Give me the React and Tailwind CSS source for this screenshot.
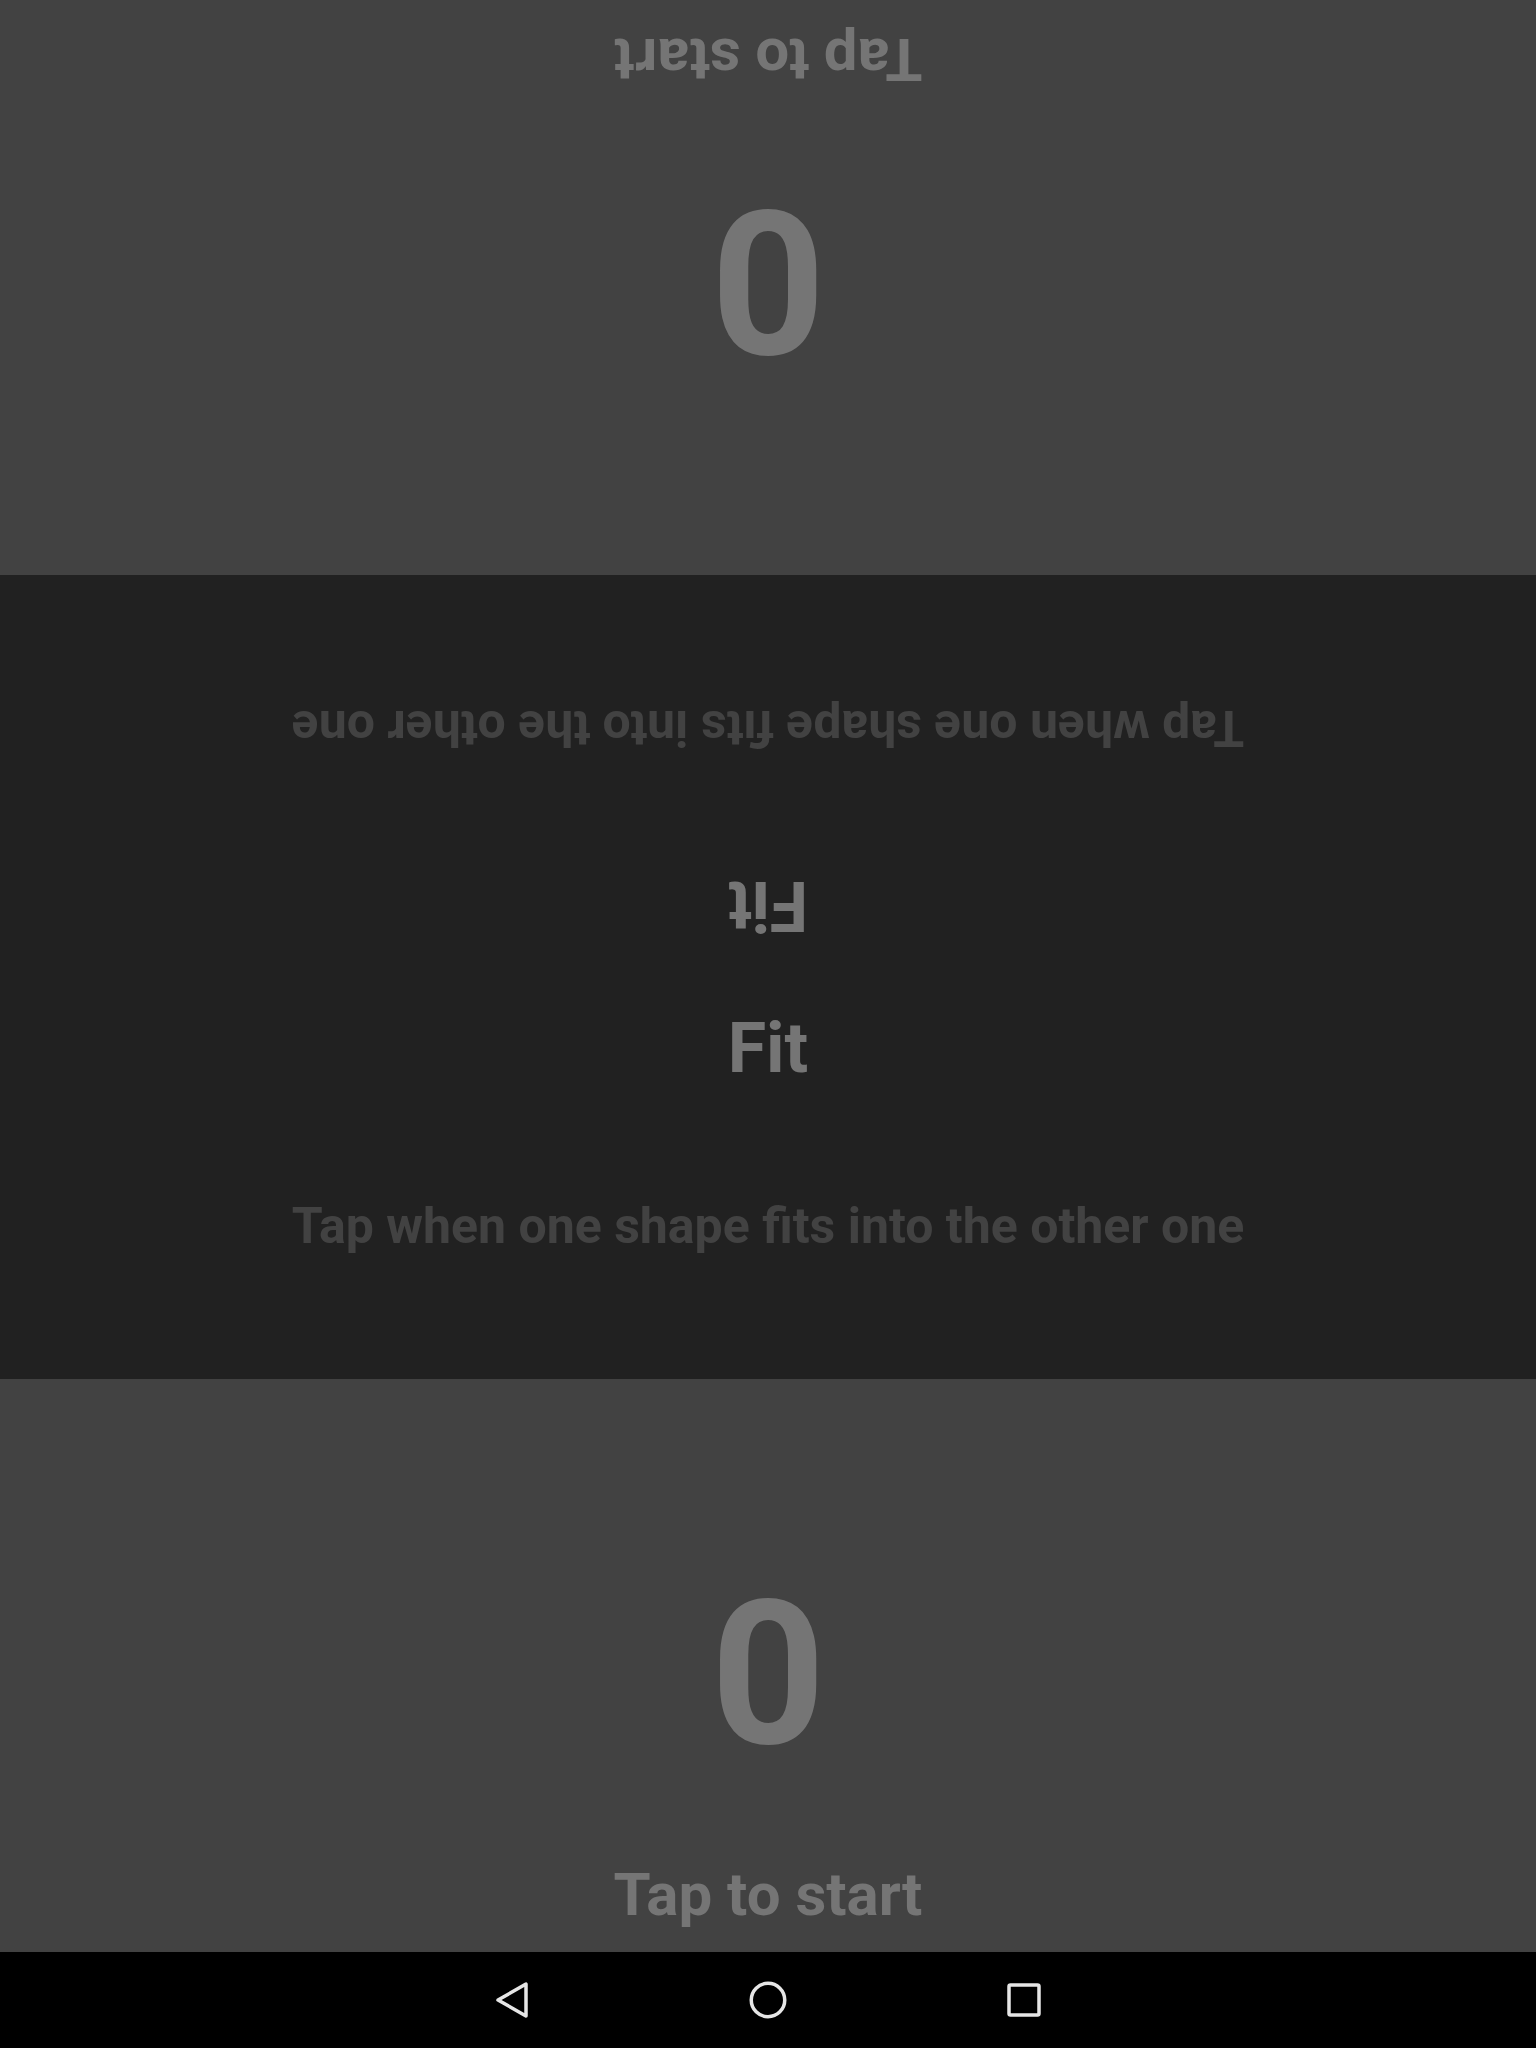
import React from "react";

const font = { fontFamily: "Roboto, 'Liberation Sans', sans-serif" };

function PlayerPanel({ className = "" }) {
  return (
    <div className={`h-full w-full flex flex-col items-center ${className}`}>
      <div className="h-[196px] shrink-0" />
      <div className="text-[200px] leading-[200px] font-bold text-[#757575]">0</div>
      <div className="h-[90px] shrink-0" />
      <div className="text-[60px] leading-[60px] font-bold text-[#757575]">Tap to start</div>
    </div>
  );
}

function MiddleHalf({ className = "" }) {
  return (
    <div className={`h-[402px] w-full flex flex-col items-center ${className}`}>
      <div className="h-[36px] shrink-0" />
      <div className="text-[70px] leading-[70px] font-bold text-[#757575]">Fit</div>
      <div className="h-[118px] shrink-0" />
      <div className="text-[50px] leading-[50px] font-bold text-[#424242] whitespace-nowrap">
        Tap when one shape fits into the other one
      </div>
    </div>
  );
}

export default function App() {
  return (
    <div className="w-[1536px] h-[2048px] flex flex-col overflow-hidden" style={font}>
      <div className="h-[575px] shrink-0 bg-[#424242] flex flex-col justify-end">
        <div className="h-[573px] rotate-180">
          <PlayerPanel />
        </div>
      </div>
      <div className="h-[804px] shrink-0 bg-[#212121] flex flex-col">
        <MiddleHalf className="rotate-180" />
        <MiddleHalf />
      </div>
      <div className="h-[573px] shrink-0 bg-[#424242]">
        <PlayerPanel />
      </div>
      <div className="h-[96px] shrink-0 bg-black flex items-center justify-center">
        <div className="w-[256px] flex items-center justify-center">
          <svg width="40" height="40" viewBox="0 0 40 40" fill="none">
            <path d="M34 4 L34 36 L6 20 Z" stroke="#e6e6e6" strokeWidth="3.5" strokeLinejoin="round" />
          </svg>
        </div>
        <div className="w-[256px] flex items-center justify-center">
          <svg width="40" height="40" viewBox="0 0 40 40" fill="none">
            <circle cx="20" cy="20" r="16.75" stroke="#e6e6e6" strokeWidth="3.5" />
          </svg>
        </div>
        <div className="w-[256px] flex items-center justify-center">
          <svg width="40" height="40" viewBox="0 0 40 40" fill="none">
            <rect x="5" y="5" width="30" height="30" rx="1.5" stroke="#e6e6e6" strokeWidth="3.5" />
          </svg>
        </div>
      </div>
    </div>
  );
}
